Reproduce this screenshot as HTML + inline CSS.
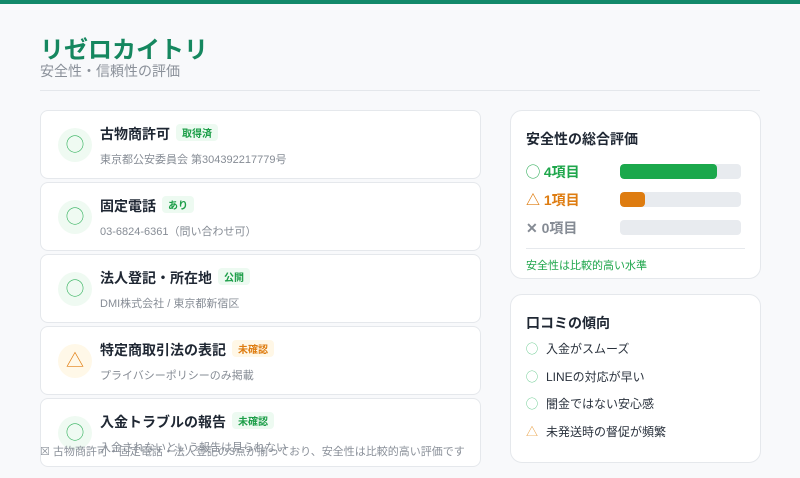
<!DOCTYPE html>
<html><head><meta charset="utf-8"><style>
*{margin:0;padding:0;box-sizing:border-box}
body{width:800px;height:478px;overflow:hidden;background:#f8f9fb;font-family:"Liberation Sans","Noto Sans CJK JP",sans-serif;position:relative}
.top{position:absolute;left:0;top:0;width:800px;height:4px;background:#12896a}
h1{position:absolute;left:40px;top:30px;font-size:24px;color:#15875f;font-weight:700}
.sub{position:absolute;left:40px;top:61px;font-size:14px;color:#8a9099}
.hr{position:absolute;left:40px;top:90px;width:720px;height:1px;background:#e4e7eb}
.card{position:absolute;left:40px;width:441px;height:69px;background:#fff;border:1px solid #e5e8ec;border-radius:8px}
.ic{position:absolute;left:17px;top:17px;width:34px;height:34px;border-radius:50%;background:#effaf2;color:#2fb05a;font-size:18px;text-align:center;line-height:34px}
.ic.w{background:#fff8e8;color:#e07e12}
.t{position:absolute;left:59px;top:13px;font-size:14px;font-weight:700;color:#1f2733;white-space:nowrap}
.b{display:inline-block;margin-left:6px;font-size:10px;padding:1px 6px;border-radius:4px;background:#edfaf1;color:#1c9e48;vertical-align:2px}
.b.w{background:#fff7e6;color:#de7c10}
.d{position:absolute;left:59px;top:40px;font-size:11px;color:#868c95;white-space:nowrap}
.rc{position:absolute;left:510px;width:251px;background:#fff;border:1px solid #e5e8ec;border-radius:12px}
.rt{position:absolute;left:15px;font-size:14px;font-weight:700;color:#1f2733}
.row{position:absolute;left:15px;font-size:14px;font-weight:700}
.bar{position:absolute;left:109px;width:121px;height:15px;border-radius:4px;background:#e8ebef;overflow:hidden}
.bar i{display:block;height:100%;border-radius:4px}
.it{position:absolute;left:15px;font-size:12px;color:#2a323d;white-space:nowrap}
.it span{display:inline-block;width:20px;color:#4cc07a}
.foot{position:absolute;left:40px;top:443px;font-size:11px;color:#8a9099;white-space:nowrap}
</style></head><body>
<div class="top"></div>
<h1>リゼロカイトリ</h1>
<div class="sub">安全性・信頼性の評価</div>
<div class="hr"></div>

<div class="card" style="top:110px"><div class="ic">◯</div><div class="t">古物商許可<span class="b">取得済</span></div><div class="d">東京都公安委員会 第304392217779号</div></div>
<div class="card" style="top:182px"><div class="ic">◯</div><div class="t">固定電話<span class="b">あり</span></div><div class="d">03-6824-6361（問い合わせ可）</div></div>
<div class="card" style="top:254px"><div class="ic">◯</div><div class="t">法人登記・所在地<span class="b">公開</span></div><div class="d">DMI株式会社 / 東京都新宿区</div></div>
<div class="card" style="top:326px"><div class="ic w">△</div><div class="t">特定商取引法の表記<span class="b w">未確認</span></div><div class="d">プライバシーポリシーのみ掲載</div></div>
<div class="card" style="top:398px"><div class="ic">◯</div><div class="t">入金トラブルの報告<span class="b">未確認</span></div><div class="d">入金されないという報告は見られない</div></div>
<div class="foot">☒ 古物商許可・固定電話・法人登記の3点が揃っており、安全性は比較的高い評価です</div>

<div class="rc" style="top:110px;height:169px">
<div class="rt" style="top:18px">安全性の総合評価</div>
<div class="row" style="top:51px;color:#1ea64b">◯ 4項目</div><div class="bar" style="top:53px"><i style="width:97px;background:#1ba84c"></i></div>
<div class="row" style="top:79px;color:#de7c10">△ 1項目</div><div class="bar" style="top:81px"><i style="width:25px;background:#de7c10"></i></div>
<div class="row" style="top:107px;color:#858b94">✕ 0項目</div><div class="bar" style="top:109px"></div>
<div style="position:absolute;left:15px;top:137px;width:219px;height:1px;background:#e6e9ed"></div>
<div style="position:absolute;left:15px;top:146px;font-size:11px;color:#1ea64b">安全性は比較的高い水準</div>
</div>

<div class="rc" style="top:294px;height:169px">
<div class="rt" style="top:18px">口コミの傾向</div>
<div class="it" style="top:45px"><span>◯</span>入金がスムーズ</div>
<div class="it" style="top:73px"><span>◯</span>LINEの対応が早い</div>
<div class="it" style="top:100px"><span>◯</span>闇金ではない安心感</div>
<div class="it" style="top:128px"><span style="color:#e8a045">△</span>未発送時の督促が頻繁</div>
</div>
</body></html>
